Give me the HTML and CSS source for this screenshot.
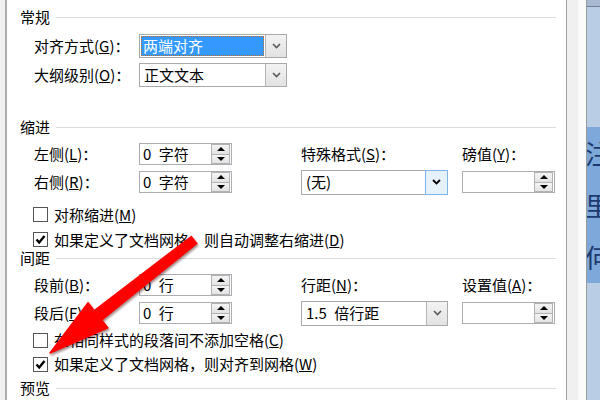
FILE: index.html
```html
<!DOCTYPE html>
<html lang="zh-CN">
<head>
<meta charset="utf-8">
<title>段落</title>
<link rel="stylesheet" href="styles.css">
</head>
<body>
<div class="window">
  <div class="edge"></div>
  <div class="panel">
    <div class="hdr hdr1"><span>常规</span><i class="rule"></i></div>
    <div class="grid general">
      <label>对齐方式(<u>G</u>)：</label>
      <div class="combo wide">
        <span class="val sel">两端对齐</span>
        <span class="drop"><svg width="9" height="6" viewBox="0 0 9 6"><polyline points="1,1 4.5,4.5 8,1" fill="none" stroke="#5a5a5a" stroke-width="1.6"/></svg></span>
      </div>
      <label>大纲级别(<u>O</u>)：</label>
      <div class="combo wide">
        <span class="val">正文文本</span>
        <span class="drop"><svg width="9" height="6" viewBox="0 0 9 6"><polyline points="1,1 4.5,4.5 8,1" fill="none" stroke="#5a5a5a" stroke-width="1.6"/></svg></span>
      </div>
    </div>

    <div class="hdr hdr2"><span>缩进</span><i class="rule"></i></div>
    <div class="grid pair indent">
      <label class="c1 r1">左侧(<u>L</u>)：</label>
      <div class="spinner c2 r1"><span class="val num">0 字符</span><span class="spin"><b class="up"></b><b class="down"></b></span></div>
      <label class="c4 r1">特殊格式(<u>S</u>)：</label>
      <label class="c6 r1">磅值(<u>Y</u>)：</label>
      <label class="c1 r2">右侧(<u>R</u>)：</label>
      <div class="spinner c2 r2"><span class="val num">0 字符</span><span class="spin"><b class="up"></b><b class="down"></b></span></div>
      <div class="combo c4 r2">
        <span class="val">(无)</span>
        <span class="drop hot"><svg width="9" height="6" viewBox="0 0 9 6"><polyline points="1,1 4.5,4.5 8,1" fill="none" stroke="#000" stroke-width="1.8"/></svg></span>
      </div>
      <div class="spinner c6 r2"><span class="val"></span><span class="spin"><b class="up"></b><b class="down"></b></span></div>
    </div>
    <div class="checks checks1">
      <div class="chk"><span class="box"></span><span>对称缩进(<u>M</u>)</span></div>
      <div class="chk"><span class="box on"><svg width="13" height="13" viewBox="0 0 13 13"><polyline points="2.5,6.5 5.2,9.5 10.5,3" fill="none" stroke="#000" stroke-width="2.4"/></svg></span><span>如果定义了文档网格，则自动调整右缩进(<u>D</u>)</span></div>
    </div>

    <div class="hdr hdr3"><span>间距</span><i class="rule"></i></div>
    <div class="grid pair spacing">
      <label class="c1 r1">段前(<u>B</u>)：</label>
      <div class="spinner c2 r1"><span class="val num">0 行</span><span class="spin"><b class="up"></b><b class="down"></b></span></div>
      <label class="c4 r1">行距(<u>N</u>)：</label>
      <label class="c6 r1">设置值(<u>A</u>)：</label>
      <label class="c1 r2">段后(<u>F</u>)：</label>
      <div class="spinner c2 r2"><span class="val num">0 行</span><span class="spin"><b class="up"></b><b class="down"></b></span></div>
      <div class="combo c4 r2">
        <span class="val num">1.5 倍行距</span>
        <span class="drop"><svg width="9" height="6" viewBox="0 0 9 6"><polyline points="1,1 4.5,4.5 8,1" fill="none" stroke="#5a5a5a" stroke-width="1.6"/></svg></span>
      </div>
      <div class="spinner c6 r2"><span class="val"></span><span class="spin"><b class="up"></b><b class="down"></b></span></div>
    </div>
    <div class="checks checks2">
      <div class="chk"><span class="box"></span><span>在相同样式的段落间不添加空格(<u>C</u>)</span></div>
      <div class="chk"><span class="box on"><svg width="13" height="13" viewBox="0 0 13 13"><polyline points="2.5,6.5 5.2,9.5 10.5,3" fill="none" stroke="#000" stroke-width="2.4"/></svg></span><span>如果定义了文档网格，则对齐到网格(<u>W</u>)</span></div>
    </div>

    <div class="hdr hdr4"><span>预览</span><i class="rule"></i></div>
  </div>
  <div class="side"></div>
  <div class="side2"></div>
  <div class="doc">
    <div class="doc-top"></div>
    <div class="doc-body">
      <div class="doc-sel">
        <p>注</p>
        <p>里</p>
        <p>何</p>
      </div>
    </div>
  </div>

  <svg class="arrow" width="600" height="400" viewBox="0 0 600 400">
    <polygon points="191.2,236.5 196.8,243.5 101.7,320 107.9,327.9 50,353 88.1,302.7 94.3,310.6" fill="#ff0000" stroke="#ff0000" stroke-width="1.5" stroke-linejoin="round"/>
  </svg>
</div>
</body>
</html>
```

FILE: styles.css
```css
* { box-sizing: border-box; }

body {
  margin: 0;
  width: 600px;
  height: 400px;
  overflow: hidden;
  font-family: "Noto Sans CJK SC", "Noto Sans", sans-serif;
  font-size: 15px;
  color: #000;
}

.window {
  position: relative;
  display: flex;
  height: 400px;
  background: #f0f0f0;
}

.edge { width: 5px; flex: none; }

.panel {
  width: 562px;
  flex: none;
  background: #fff;
  border-left: 2px solid #acacac;
  border-right: 1px solid #a0a0a0;
  padding-top: 9px;
}

.side { width: 11px; flex: none; background: #f0f0f0; }
.side2 { width: 8px; flex: none; background: #fbfbfb; }

.doc {
  width: 14px;
  flex: none;
  border-left: 1px solid #9a9a9a;
  background: #b9cde5;
  overflow: hidden;
}

.doc-top {
  height: 7px;
  background: #a9bad0;
  border-bottom: 1px solid #6f8099;
}

.doc-body { padding-top: 120px; }

.doc-sel {
  background: #7ea8da;
  height: 156px;
}

.doc-sel p {
  margin: 0;
  height: 52px;
  line-height: 52px;
  font-size: 26px;
  color: #1d3a6e;
  margin-left: -2px;
  white-space: nowrap;
}

/* section headers */
.hdr {
  display: flex;
  align-items: center;
  height: 16px;
  line-height: 16px;
  padding-left: 13px;
  margin-right: 10px;
  gap: 6px;
}
.hdr .rule { flex: 1; border-top: 1px solid #dcdcdc; }

.hdr2 { margin-top: 30px; }
.hdr3 { margin-top: 0; }
.hdr4 { margin-top: 5px; }

/* grids */
.grid {
  display: grid;
  padding-left: 27px;
  align-items: center;
}

.grid label { line-height: 16px; white-space: nowrap; }

.general {
  margin-top: 6px;
  grid-template-columns: 105px 148px;
  grid-template-rows: 29px 29px;
}

.pair {
  grid-template-columns: 105px 93px 69px 147px 14px 93px;
  grid-template-rows: 28px 28px;
}
.indent { margin-top: 5px; }
.spacing { margin-top: 5px; }

.c1 { grid-column: 1; }
.c2 { grid-column: 2; }
.c4 { grid-column: 4; }
.c6 { grid-column: 6; }
.r1 { grid-row: 1; }
.r2 { grid-row: 2; }

/* combo box */
.combo {
  display: flex;
  height: 25px;
  border: 1px solid #a9a9a9;
  background: #fff;
}
.combo.wide { height: 24px; }

.combo .val {
  flex: 1;
  padding-left: 4px;
  line-height: 22px;
  white-space: nowrap;
  overflow: hidden;
}

.combo .val.sel {
  margin: 1px;
  padding-left: 2px;
  line-height: 20px;
  background: #3399ff;
  color: #fff;
  outline: 1px dotted #c0702a;
  outline-offset: -1px;
}

.drop {
  width: 21px;
  flex: none;
  display: flex;
  align-items: center;
  justify-content: center;
  border-left: 1px solid #b4b4b4;
  background: linear-gradient(#f3f3f3, #e2e2e2);
}

.drop.hot {
  background: #e5f1fb;
  border: 1px solid #7eb4ea;
  margin: -1px -1px -1px 0;
  width: 23px;
}

/* spinner */
.spinner {
  display: flex;
  height: 22px;
  border: 1px solid #abadb3;
  background: #fff;
}

.spinner .val {
  flex: 1;
  padding-left: 3px;
  line-height: 20px;
  white-space: nowrap;
}

.num { word-spacing: 4px; }

.spin {
  width: 19px;
  flex: none;
  display: flex;
  flex-direction: column;
  margin-right: 1px;
}

.spin b {
  flex: 1;
  display: flex;
  align-items: center;
  justify-content: center;
  border: 1px solid #b2b2b2;
  background: linear-gradient(#f4f4f4, #e3e3e3);
}
.spin b + b { border-top: none; }

.spin .up::before {
  content: "";
  border-left: 4px solid transparent;
  border-right: 4px solid transparent;
  border-bottom: 4px solid #000;
}
.spin .down::before {
  content: "";
  border-left: 4px solid transparent;
  border-right: 4px solid transparent;
  border-top: 4px solid #000;
}

/* checkboxes */
.checks {
  display: flex;
  flex-direction: column;
  padding-left: 26px;
}
.checks1 { margin-top: 8px; gap: 4px; }
.checks1 .chk { height: 21px; }
.checks2 { margin-top: 2px; gap: 2px; }
.checks2 .chk { height: 22px; }

.chk {
  display: flex;
  align-items: center;
  gap: 6px;
  white-space: nowrap;
  line-height: 16px;
}

.box {
  width: 15px;
  height: 15px;
  flex: none;
  border: 1px solid #555;
  background: #fff;
  display: flex;
  align-items: center;
  justify-content: center;
}

/* annotation arrow overlay */
.arrow {
  position: absolute;
  left: 0;
  top: 0;
  pointer-events: none;
  filter: drop-shadow(1px 2px 1px rgba(60, 0, 0, 0.45));
}
```
